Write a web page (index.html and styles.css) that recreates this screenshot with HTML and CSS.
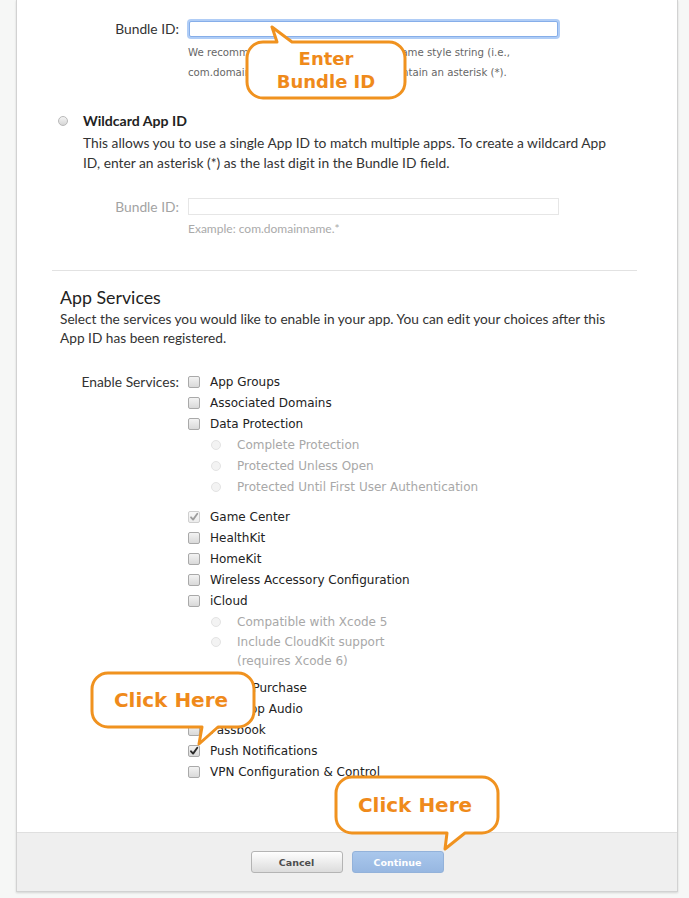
FILE: index.html
```html
<!DOCTYPE html>
<html>
<head>
<meta charset="utf-8">
<title>Register App ID</title>
<link rel="stylesheet" href="styles.css">
</head>
<body>
<div class="panel">
  <div class="content">
    <div class="frow">
      <div class="flabel">Bundle ID:</div>
      <div class="fcol">
        <div class="input input-focus"></div>
        <p class="help">We recommend using a reverse-domain name style string (i.e.,<br>com.domainname.appname). It cannot contain an asterisk (*).</p>
      </div>
    </div>

    <div class="option">
      <span class="radio"></span>
      <div class="opt-body">
        <div class="opt-title">Wildcard App ID</div>
        <p class="opt-desc">This allows you to use a single App ID to match multiple apps. To create a wildcard App<br>ID, enter an asterisk (*) as the last digit in the Bundle ID field.</p>
      </div>
    </div>

    <div class="frow frow-disabled">
      <div class="flabel">Bundle ID:</div>
      <div class="fcol">
        <div class="input input-disabled"></div>
        <p class="example">Example: com.domainname.*</p>
      </div>
    </div>

    <hr class="sep">

    <h2 class="svc-title">App Services</h2>
    <p class="svc-desc">Select the services you would like to enable in your app. You can edit your choices after this<br>App ID has been registered.</p>

    <div class="svc-grid">
      <div class="flabel svc-label">Enable Services:</div>
      <ul class="svc-list">
        <li class="svc"><span class="cb"></span><span>App Groups</span></li>
        <li class="svc"><span class="cb"></span><span>Associated Domains</span></li>
        <li class="svc"><span class="cb"></span><span>Data Protection</span></li>
        <li class="sub"><span class="rd"></span><span>Complete Protection</span></li>
        <li class="sub"><span class="rd"></span><span>Protected Unless Open</span></li>
        <li class="sub"><span class="rd"></span><span>Protected Until First User Authentication</span></li>
        <li class="svc gap9"><span class="cb cb-dis"><svg viewBox="0 0 12 12" width="12" height="12"><path d="M3 6.3 L5.1 8.6 L9.3 2.8" fill="none" stroke="#9d9d9d" stroke-width="1.8" stroke-linecap="round" stroke-linejoin="round"/></svg></span><span>Game Center</span></li>
        <li class="svc"><span class="cb"></span><span>HealthKit</span></li>
        <li class="svc"><span class="cb"></span><span>HomeKit</span></li>
        <li class="svc"><span class="cb"></span><span>Wireless Accessory Configuration</span></li>
        <li class="svc"><span class="cb"></span><span>iCloud</span></li>
        <li class="sub"><span class="rd"></span><span>Compatible with Xcode 5</span></li>
        <li class="sub sub-wrap"><span class="rd"></span><span class="wrap-text">Include CloudKit support<br>(requires Xcode 6)</span></li>
        <li class="svc gap6"><span class="cb"></span><span>In-App Purchase</span></li>
        <li class="svc"><span class="cb"></span><span>Inter-App Audio</span></li>
        <li class="svc"><span class="cb"></span><span>Passbook</span></li>
        <li class="svc"><span class="cb cb-on"><svg viewBox="0 0 12 12" width="12" height="12"><path d="M3 6.3 L5.1 8.6 L9.3 2.8" fill="none" stroke="#2b2b2b" stroke-width="1.9" stroke-linecap="round" stroke-linejoin="round"/></svg></span><span>Push Notifications</span></li>
        <li class="svc"><span class="cb"></span><span>VPN Configuration &amp; Control</span></li>
      </ul>
    </div>
  </div>
  <div class="footer">
    <button class="btn btn-cancel">Cancel</button>
    <button class="btn btn-continue">Continue</button>
  </div>
</div>

<div class="callout callout-enter">
  <svg class="bubble" width="175" height="84" viewBox="0 0 175 84">
    <path d="M23 20 L37 20 L32 5 L52 20 L149 20 A16 16 0 0 1 165 36 L165 60 A16 16 0 0 1 149 76 L23 76 A16 16 0 0 1 7 60 L7 36 A16 16 0 0 1 23 20 Z" fill="#fff" stroke="#f0921f" stroke-width="3" stroke-linejoin="round"/>
  </svg>
  <div class="callout-text two">Enter<br>Bundle ID</div>
</div>

<div class="callout callout-click1">
  <svg class="bubble" width="175" height="84" viewBox="0 0 175 84">
    <path d="M22 6 L152 6 A16 16 0 0 1 168 22 L168 44 A16 16 0 0 1 152 60 L132 60 L113 77 L116 60 L22 60 A16 16 0 0 1 6 44 L6 22 A16 16 0 0 1 22 6 Z" fill="#fff" stroke="#f0921f" stroke-width="3" stroke-linejoin="round"/>
  </svg>
  <div class="callout-text">Click Here</div>
</div>

<div class="callout callout-click2">
  <svg class="bubble" width="175" height="85" viewBox="0 0 175 85">
    <path d="M22 6 L152 6 A16 16 0 0 1 168 22 L168 46 A16 16 0 0 1 152 62 L135 62 L115 78 L117 62 L22 62 A16 16 0 0 1 6 46 L6 22 A16 16 0 0 1 22 6 Z" fill="#fff" stroke="#f0921f" stroke-width="3" stroke-linejoin="round"/>
  </svg>
  <div class="callout-text">Click Here</div>
</div>
</body>
</html>
```

FILE: styles.css
```css
* { box-sizing: border-box; }

html, body {
  margin: 0;
  padding: 0;
}

body {
  width: 689px;
  height: 898px;
  overflow: hidden;
  position: relative;
  background: #f6f7f6;
  font-family: "DejaVu Sans", sans-serif;
  color: #222;
}

.panel {
  margin-left: 16px;
  width: 662px;
  background: #fff;
  border: 1px solid #d2d2d2;
  border-top: none;
  box-shadow: 0 1px 2px rgba(0, 0, 0, 0.14);
}

.content {
  padding: 19px 0 50px;
}

/* form rows */
.frow {
  display: flex;
  align-items: flex-start;
  gap: 8px;
}

.flabel {
  width: 162px;
  flex: none;
  text-align: right;
  font-family: Lato, sans-serif;
  font-size: 13.8px;
  line-height: 20px;
  color: #333;
  white-space: nowrap;
}

.fcol {
  display: flex;
  flex-direction: column;
}

.input {
  background: #fff;
}

.input-focus {
  width: 369px;
  height: 16px;
  margin: 2px 0 0 2px;
  border: 1px solid #86aee9;
  border-radius: 2px;
  box-shadow: 0 0 0 2px rgba(150, 188, 243, 0.75);
}

.help {
  margin: 6px 0 0 1px;
  font-size: 10.2px;
  line-height: 20px;
  color: #666;
  white-space: nowrap;
}

/* wildcard option */
.option {
  display: flex;
  align-items: flex-start;
  gap: 15px;
  margin-top: 28px;
  padding-left: 41px;
}

.radio {
  flex: none;
  width: 10px;
  height: 10px;
  margin-top: 5px;
  border-radius: 50%;
  border: 1px solid #b9b9b9;
  background: linear-gradient(#f4f4f4, #d6d6d6);
}

.opt-title {
  font-family: Lato, sans-serif;
  font-weight: 700;
  font-size: 14.1px;
  line-height: 20px;
  color: #222;
}

.opt-desc {
  margin: 2px 0 0;
  font-family: Lato, sans-serif;
  font-size: 13.8px;
  line-height: 20px;
  color: #333;
  white-space: nowrap;
}

.frow-disabled {
  margin-top: 25px;
}

.frow-disabled .flabel {
  line-height: 17px;
  color: #a3a3a3;
}

.input-disabled {
  width: 371px;
  height: 17px;
  margin-left: 1px;
  border: 1px solid #e6e6e6;
}

.example {
  margin: 4px 0 0 1px;
  font-family: Lato, sans-serif;
  font-size: 12px;
  line-height: 20px;
  color: #aaa;
}

.sep {
  height: 1px;
  margin: 31px 40px 0 35px;
  border: 0;
  background: #e2e2e2;
}

.svc-title {
  margin: 14px 0 0 43px;
  font-family: Lato, sans-serif;
  font-weight: 400;
  font-size: 17.8px;
  line-height: 24px;
  color: #222;
}

.svc-desc {
  margin: 0 0 0 43px;
  font-family: Lato, sans-serif;
  font-size: 13.7px;
  line-height: 19px;
  color: #333;
  white-space: nowrap;
}

.svc-grid {
  display: flex;
  align-items: flex-start;
  gap: 9px;
  margin-top: 24px;
}

.svc-label {
  line-height: 21px;
}

.svc-list {
  list-style: none;
  margin: 0;
  padding: 0;
  font-size: 12px;
  color: #222;
}

.svc, .sub {
  display: flex;
  align-items: center;
  height: 21px;
  white-space: nowrap;
}

.svc { gap: 10px; }

.sub {
  gap: 16px;
  padding-left: 23px;
  color: #a8a8a8;
}

.gap9 { margin-top: 9px; }
.gap6 { margin-top: 6px; }

.sub-wrap {
  height: auto;
  align-items: flex-start;
  padding-top: 1px;
}

.sub-wrap .rd { margin-top: 4px; }

.wrap-text {
  line-height: 19px;
}

.cb {
  flex: none;
  width: 12px;
  height: 12px;
  border: 1px solid #a9a9a9;
  border-radius: 2px;
  background: linear-gradient(#f3f3f3, #d9d9d9);
  position: relative;
}

.cb svg {
  position: absolute;
  left: -1px;
  top: -1px;
}

.cb-dis {
  border-color: #cfcfcf;
  background: linear-gradient(#f8f8f8, #ececec);
}

.rd {
  flex: none;
  width: 10px;
  height: 10px;
  border-radius: 50%;
  border: 1px solid #e3e3e3;
  background: #f3f3f3;
}

/* footer */
.footer {
  display: flex;
  justify-content: center;
  gap: 9px;
  padding: 18px 0;
  border-top: 1px solid #dfdfdf;
  background: #efefef;
}

.btn {
  width: 92px;
  height: 22px;
  padding: 0;
  border-radius: 3px;
  font-family: "DejaVu Sans", sans-serif;
  font-weight: 700;
  font-size: 9.5px;
}

.btn-cancel {
  border: 1px solid #b4b4b4;
  background: linear-gradient(#fefefe, #dcdcdc);
  color: #4d4d4d;
}

.btn-continue {
  border: 1px solid #93b2da;
  background: linear-gradient(#a9c7ec, #97b7e1);
  color: #fff;
}

/* callouts */
.callout {
  position: absolute;
}

.bubble {
  position: absolute;
  left: 0;
  top: 0;
}

.callout-text {
  position: absolute;
  display: flex;
  align-items: center;
  justify-content: center;
  text-align: center;
  font-family: "DejaVu Sans", sans-serif;
  font-weight: 700;
  font-size: 20px;
  color: #ef8a1b;
  white-space: nowrap;
}

.callout-text.two {
  font-size: 18px;
  line-height: 23px;
}

.callout-enter {
  left: 240px;
  top: 22px;
  width: 175px;
  height: 84px;
}

.callout-enter .callout-text {
  left: 7px;
  top: 20px;
  width: 158px;
  height: 56px;
}

.callout-click1 {
  left: 86px;
  top: 667px;
  width: 175px;
  height: 84px;
}

.callout-click1 .callout-text {
  left: 4px;
  top: 6px;
  width: 162px;
  height: 54px;
}

.callout-click2 {
  left: 330px;
  top: 771px;
  width: 175px;
  height: 85px;
}

.callout-click2 .callout-text {
  left: 4px;
  top: 6px;
  width: 162px;
  height: 56px;
}
```
